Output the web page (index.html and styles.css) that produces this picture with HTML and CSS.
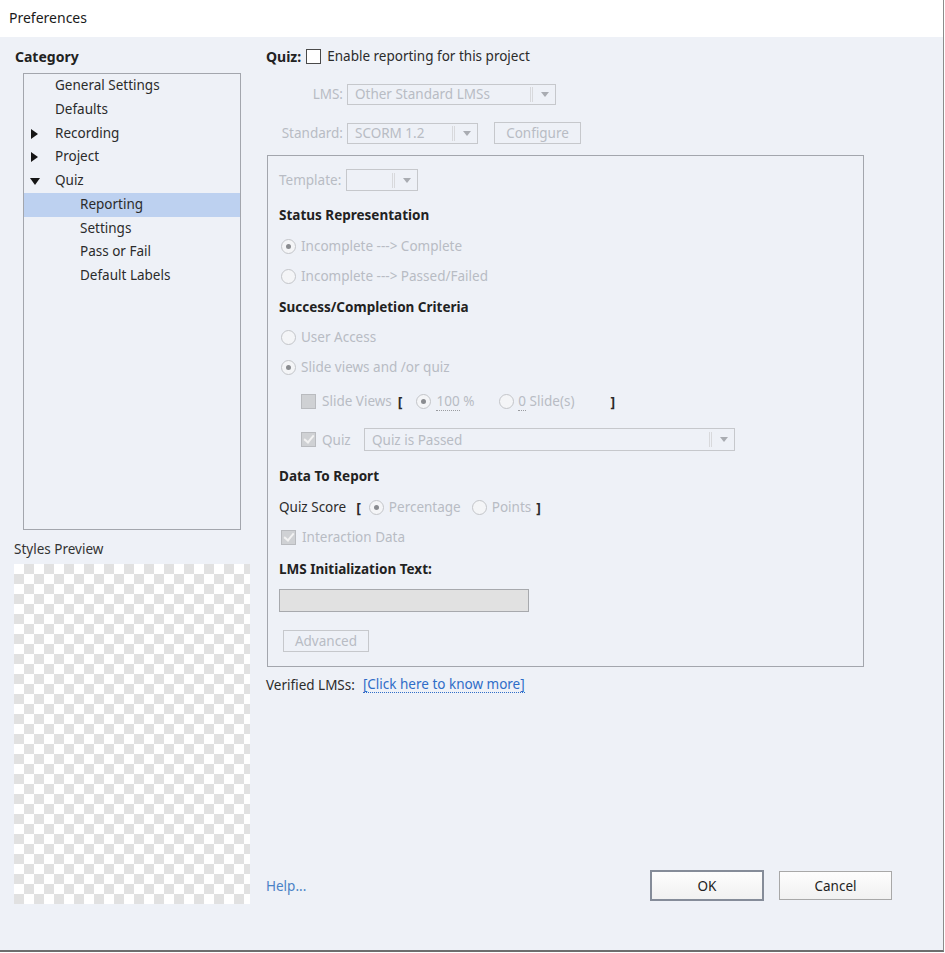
FILE: index.html
```html
<!DOCTYPE html>
<html lang="en">
<head>
  <meta charset="UTF-8">
  <title>Preferences</title>
  <link rel="stylesheet" href="styles.css">
</head>
<body>
  <div class="window">
    <!-- Barra de título -->
    <div class="titlebar">Preferences</div>

    <div class="content">
      <!-- Columna izquierda: categorías y vista previa -->
      <div class="left">
        <div class="category-label">Category</div>
        <div class="tree">
          <div class="tree-row lvl1">General Settings</div>
          <div class="tree-row lvl1">Defaults</div>
          <div class="tree-row lvl1"><span class="arrow-right"></span>Recording</div>
          <div class="tree-row lvl1"><span class="arrow-right"></span>Project</div>
          <div class="tree-row lvl1"><span class="arrow-down"></span>Quiz</div>
          <div class="tree-row lvl2 selected">Reporting</div>
          <div class="tree-row lvl2">Settings</div>
          <div class="tree-row lvl2">Pass or Fail</div>
          <div class="tree-row lvl2">Default Labels</div>
        </div>
        <div class="preview-label">Styles Preview</div>
        <div class="checker"></div>
      </div>

      <!-- Columna derecha: opciones de reporting -->
      <div class="right">
        <div class="row quiz-row">
          <span class="strong">Quiz:</span>
          <span class="check enabled"></span>
          <span>Enable reporting for this project</span>
        </div>

        <div class="row lms-row">
          <span class="field-label dim">LMS:</span>
          <div class="select w-lms"><span class="select-text">Other Standard LMSs</span><span class="select-btn"></span></div>
        </div>

        <div class="row std-row">
          <span class="field-label dim">Standard:</span>
          <div class="select w-std"><span class="select-text">SCORM 1.2</span><span class="select-btn"></span></div>
          <button class="btn-dis configure">Configure</button>
        </div>

        <div class="groupbox">
          <div class="row tpl-row">
            <span class="dim">Template:</span>
            <div class="select w-tpl"><span class="select-text"></span><span class="select-btn"></span></div>
          </div>

          <div class="row heading h-status">Status Representation</div>
          <div class="row opt r1"><span class="radio on"></span><span class="dim">Incomplete ---&gt; Complete</span></div>
          <div class="row opt"><span class="radio"></span><span class="dim">Incomplete ---&gt; Passed/Failed</span></div>

          <div class="row heading h-success">Success/Completion Criteria</div>
          <div class="row opt"><span class="radio"></span><span class="dim">User Access</span></div>
          <div class="row opt"><span class="radio on"></span><span class="dim">Slide views and /or quiz</span></div>

          <div class="row sub slide-row">
            <span class="check"></span>
            <span class="dim">Slide Views</span>
            <span class="bracket b-open">[</span>
            <span class="radio on"></span>
            <span class="dim"><span class="dotted">100</span> %</span>
            <span class="radio r-slides"></span>
            <span class="dim"><span class="dotted">0</span> Slide(s)</span>
            <span class="bracket b-close">]</span>
          </div>

          <div class="row sub quizsel-row">
            <span class="check checked"></span>
            <span class="dim quiz-lbl">Quiz</span>
            <div class="select w-quiz"><span class="select-text">Quiz is Passed</span><span class="select-btn"></span></div>
          </div>

          <div class="row heading h-data">Data To Report</div>
          <div class="row score-row">
            <span>Quiz Score</span>
            <span class="bracket b-score">[</span>
            <span class="radio on"></span>
            <span class="dim">Percentage</span>
            <span class="radio r-points"></span>
            <span class="dim">Points</span>
            <span class="bracket b-score-end">]</span>
          </div>
          <div class="row opt"><span class="check checked"></span><span class="dim">Interaction Data</span></div>

          <div class="row heading h-init">LMS Initialization Text:</div>
          <div class="textbox"></div>
          <button class="btn-dis advanced">Advanced</button>
        </div>

        <div class="row verified-row">
          <span>Verified LMSs:</span>
          <a class="link" href="#">[Click here to know more]</a>
        </div>

        <div class="footer">
          <a class="help" href="#">Help...</a>
          <div class="footer-buttons">
            <button class="btn btn-ok">OK</button>
            <button class="btn btn-cancel">Cancel</button>
          </div>
        </div>
      </div>
    </div>
  </div>
</body>
</html>
```

FILE: styles.css
```css
/* Estilo global de la ventana */
html, body {
  margin: 0;
  padding: 0;
  background-color: #ffffff;
  font-family: 'Noto Sans', 'Open Sans', sans-serif;
  font-size: 13.5px;
  color: #2b2b2b;
}

.window {
  width: 943px;
  height: 950px;
  border-right: 1px solid #8c8c8c;
  border-bottom: 2px solid #6e6e6e;
  display: flex;
  flex-direction: column;
}

/* Barra de título */
.titlebar {
  height: 37px;
  line-height: 35px;
  padding-left: 9px;
  font-size: 14px;
  color: #1a1a1a;
  background-color: #fff;
}

.content {
  flex: 1;
  display: flex;
  background-color: #eef1f7;
}

/* Columna izquierda */
.left {
  width: 258px;
  display: flex;
  flex-direction: column;
}

.category-label {
  margin: 10px 0 0 15px;
  height: 20px;
  line-height: 20px;
  font-weight: bold;
  font-size: 14px;
  color: #222;
}

.tree {
  margin: 6px 0 0 23px;
  width: 216px;
  height: 455px;
  border: 1px solid #a3a6ad;
}

.tree-row {
  height: 23.75px;
  line-height: 23.75px;
  position: relative;
  white-space: nowrap;
}
.tree-row.lvl1 { padding-left: 31px; }
.tree-row.lvl2 { padding-left: 56px; }
.tree-row.selected { background-color: #bdd1f0; }

/* Triángulos del árbol */
.arrow-right {
  position: absolute;
  left: 7px;
  top: 7px;
  border-left: 7px solid #151515;
  border-top: 5px solid transparent;
  border-bottom: 5px solid transparent;
}
.arrow-down {
  position: absolute;
  left: 6px;
  top: 9px;
  border-top: 7px solid #151515;
  border-left: 5px solid transparent;
  border-right: 5px solid transparent;
}

.preview-label {
  margin: 10px 0 0 14px;
  height: 18px;
  line-height: 18px;
  color: #333;
}

.checker {
  margin: 6px 0 0 14px;
  width: 236px;
  height: 340px;
  background-color: #fff;
  background-image: repeating-conic-gradient(#e1e1e1 0 25%, #ffffff 0 50%);
  background-size: 20px 20px;
}

/* Columna derecha */
.right {
  flex: 1;
  display: flex;
  flex-direction: column;
  padding-left: 8px;
  padding-right: 51px;
}

.row {
  display: flex;
  align-items: center;
  height: 20px;
  white-space: nowrap;
}

.strong { font-weight: bold; font-size: 14px; color: #222; }
.dim { color: #b8bcc4; }

.quiz-row { margin-top: 9px; }
.quiz-row .check { margin: 0 6px 0 5px; }

.field-label {
  width: 77px;
  text-align: right;
  margin-right: 4px;
}

.lms-row { margin-top: 17px; height: 22px; }
.std-row { margin-top: 17px; height: 22px; }

/* Listas desplegables deshabilitadas */
.select {
  display: flex;
  align-items: center;
  height: 19px;
  border: 1px solid #c6c8cc;
  background-color: #eef1f7;
  box-sizing: content-box;
}
.select-text {
  flex: 1;
  padding-left: 7px;
  color: #b8bcc4;
}
.select-btn {
  width: 22px;
  height: 15px;
  border-left: 3px double #d8d9dc;
  position: relative;
}
.select-btn::after {
  content: "";
  position: absolute;
  left: 8px;
  top: 5px;
  border-top: 5px solid #a9acb2;
  border-left: 4px solid transparent;
  border-right: 4px solid transparent;
}
.w-lms { width: 207px; }
.w-std { width: 129px; }
.w-tpl { width: 70px; margin-left: 5px; height: 20px; }
.w-quiz { width: 369px; margin-left: 14px; height: 21px; }

/* Botones deshabilitados */
.btn-dis {
  font-family: inherit;
  font-size: 13.5px;
  color: #b8bcc4;
  background-color: #eef1f7;
  border: 1px solid #c6c8cc;
  padding: 0;
  height: 22px;
}
.configure { width: 87px; margin-left: 16px; }

/* Caja de grupo */
.groupbox {
  margin: 11px 0 0 1px;
  border: 1px solid #a3a6ad;
  padding: 0 0 14px 11px;
  width: 584px;
}

.tpl-row { margin-top: 13px; height: 22px; }
.heading { font-weight: bold; color: #222; }
.h-status { margin-top: 14px; }
.h-success { margin-top: 11px; }
.h-data { margin-top: 15px; }
.h-init { margin-top: 12px; }
.opt { margin-top: 10px; padding-left: 2px; }
.r1 { margin-top: 11px; }
.sub { padding-left: 22px; }
.slide-row { margin-top: 13px; height: 22px; }
.quizsel-row { margin-top: 16px; height: 23px; }

/* Radios */
.radio {
  width: 13px;
  height: 13px;
  border: 1px solid #c3c5c9;
  border-radius: 50%;
  background-color: #f4f5f7;
  margin-right: 5px;
  position: relative;
  flex-shrink: 0;
}
.radio.on::after {
  content: "";
  position: absolute;
  left: 4px;
  top: 4px;
  width: 5px;
  height: 5px;
  border-radius: 50%;
  background-color: #8a8c90;
}

/* Casillas */
.check {
  width: 13px;
  height: 13px;
  border: 1px solid #b9bbbf;
  background-color: #cfd1d4;
  margin-right: 6px;
  position: relative;
  flex-shrink: 0;
}
.check.enabled {
  background-color: #fff;
  border-color: #4a4a4a;
}
.check.checked::after {
  content: "";
  position: absolute;
  left: 4px;
  top: 0px;
  width: 4px;
  height: 8px;
  border-right: 2px solid #f2f2f2;
  border-bottom: 2px solid #f2f2f2;
  transform: rotate(40deg);
}

.bracket {
  font-weight: bold;
  font-size: 14px;
  color: #2a2a2a;
}
.b-open { margin: 0 14px 0 6px; }
.r-slides { margin-left: 25px; margin-right: 4px; }
.b-close { margin-left: 36px; }
.dotted {
  border-bottom: 1px dotted #9a9ca0;
  line-height: 14px;
}
.quiz-lbl { width: 28px; }

.score-row { margin-top: 11px; }
.b-score { margin: 0 8px 0 10px; }
.r-points { margin-left: 11px; }
.b-score-end { margin-left: 5px; }

.textbox {
  margin-top: 10px;
  width: 248px;
  height: 21px;
  border: 1px solid #a7a9ad;
  background-color: #e1e1e1;
}

.advanced {
  margin: 18px 0 0 4px;
  width: 86px;
  height: 22px;
  display: block;
}

.verified-row { margin-top: 8px; }
.link {
  margin-left: 8px;
  color: #2f6dc8;
  text-decoration: none;
  border-bottom: 1px dotted #2f6dc8;
  line-height: 15px;
}

/* Pie con botones */
.footer {
  margin-top: auto;
  margin-bottom: 49px;
  display: flex;
  align-items: center;
  justify-content: space-between;
}
.help {
  color: #4a82c6;
  text-decoration: none;
}
.footer-buttons {
  display: flex;
  align-items: center;
  gap: 15px;
}
.btn {
  font-family: inherit;
  font-size: 13.5px;
  color: #222;
  background: linear-gradient(#fdfdfd, #f1f1f1);
  padding: 0;
}
.btn-ok {
  width: 114px;
  height: 31px;
  border: 2px solid #858c99;
}
.btn-cancel {
  width: 113px;
  height: 29px;
  border: 1px solid #a8a8a8;
}
```
